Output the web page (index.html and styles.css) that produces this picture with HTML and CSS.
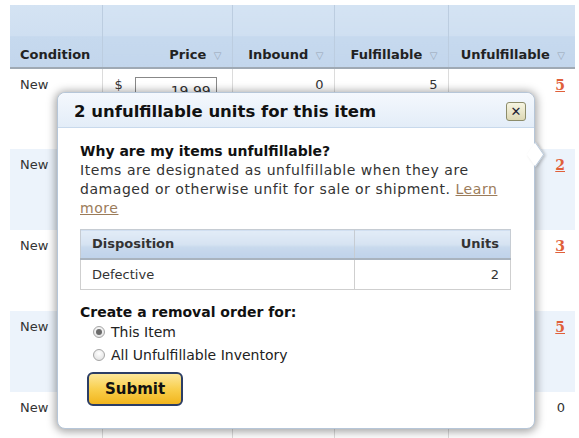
FILE: index.html
```html
<!DOCTYPE html>
<html>
<head>
<meta charset="utf-8">
<link rel="stylesheet" href="styles.css">
</head>
<body>
<div class="page">
  <table class="grid">
    <colgroup>
      <col class="c1"><col class="c2"><col class="c3"><col class="c4"><col class="c5">
    </colgroup>
    <thead>
      <tr>
        <th class="left">Condition</th>
        <th>Price <span class="sort">&#9661;</span></th>
        <th>Inbound <span class="sort">&#9661;</span></th>
        <th>Fulfillable <span class="sort">&#9661;</span></th>
        <th>Unfulfillable <span class="sort">&#9661;</span></th>
      </tr>
    </thead>
    <tbody>
      <tr>
        <td>New</td>
        <td class="price"><span class="dollar">$</span><span class="pinput">19.99</span></td>
        <td class="num">0</td>
        <td class="num">5</td>
        <td class="num"><a class="unf">5</a></td>
      </tr>
      <tr class="alt">
        <td>New</td><td></td><td></td><td></td>
        <td class="num"><a class="unf">2</a></td>
      </tr>
      <tr>
        <td>New</td><td></td><td></td><td></td>
        <td class="num"><a class="unf">3</a></td>
      </tr>
      <tr class="alt">
        <td>New</td><td></td><td></td><td></td>
        <td class="num"><a class="unf">5</a></td>
      </tr>
      <tr>
        <td>New</td><td></td><td></td><td></td>
        <td class="num">0</td>
      </tr>
    </tbody>
  </table>

  <div class="popover">
    <div class="pop-head">
      <span class="pop-title">2 unfulfillable units for this item</span>
      <span class="close">&#x2715;</span>
    </div>
    <div class="pop-body">
      <div class="q">Why are my items unfulfillable?</div>
      <p class="desc">Items are designated as unfulfillable when they are damaged or otherwise unfit for sale or shipment. <a class="learn">Learn</a> <a class="learn">more</a></p>
      <table class="disp">
        <thead>
          <tr><th class="dleft">Disposition</th><th class="dright">Units</th></tr>
        </thead>
        <tbody>
          <tr><td class="dleft">Defective</td><td class="dright">2</td></tr>
        </tbody>
      </table>
      <div class="q q2">Create a removal order for:</div>
      <div class="opt"><span class="radio on"></span>This Item</div>
      <div class="opt"><span class="radio"></span>All Unfulfillable Inventory</div>
      <button class="submit">Submit</button>
    </div>
    <span class="arrow"></span>
  </div>
</div>
</body>
</html>
```

FILE: styles.css
```css
html, body {
  margin: 0;
  padding: 0;
  background: #fff;
}
body {
  font-family: "DejaVu Sans", Verdana, sans-serif;
  width: 579px;
  height: 438px;
  overflow: hidden;
}
.page {
  position: relative;
  padding: 5px 4px 0 10px;
}
.grid {
  border-collapse: collapse;
  table-layout: fixed;
  width: 565px;
  font-size: 13px;
  color: #333;
}
.c1 { width: 92px; }
.c2 { width: 130px; }
.c3 { width: 102px; }
.c4 { width: 114px; }
.c5 { width: 127px; }
.grid thead th {
  height: 57px;
  padding: 0 10px 5px 10px;
  vertical-align: bottom;
  text-align: right;
  font-size: 13px;
  font-weight: bold;
  color: #222;
  background: linear-gradient(#d4e3f3 0%, #cfdff1 50%, #c6d9ee 51%, #c3d6ec 100%);
  border-left: 1px solid #bccde0;
  border-bottom: 2px solid #9fa9b4;
  white-space: nowrap;
}
.grid thead th.left {
  text-align: left;
  border-left: none;
}
.sort {
  color: #98a6b6;
  font-size: 10px;
  font-weight: normal;
  margin-left: 3px;
}
.grid td {
  height: 81px;
  padding: 8px 10px 0 10px;
  vertical-align: top;
  border-left: 1px solid #dcdcdc;
  box-sizing: border-box;
}
.grid td:first-child { border-left: none; }
.grid tr.alt td { background: #ecf3fb; }
.grid td.num { text-align: right; }
.price { white-space: nowrap; }
.dollar { margin-left: 2px; }
.pinput {
  display: inline-block;
  width: 70px;
  height: 16px;
  margin-left: 12px;
  border: 1px solid #888;
  text-align: right;
  padding: 2px 5px 0 5px;
  vertical-align: top;
  line-height: 22px;
  font-size: 14px;
}
.unf {
  color: #e0603a;
  font-weight: bold;
  text-decoration: underline;
  font-family: "DejaVu Serif", serif;
  font-size: 14px;
}

/* popover */
.popover {
  position: absolute;
  left: 57px;
  top: 92px;
  width: 476px;
  height: 335px;
  background: #fff;
  border: 1px solid #b6c6d8;
  border-radius: 8px;
  box-shadow: 0 1px 8px 2px rgba(0,0,0,0.35);
  color: #222;
}
.pop-head {
  height: 34px;
  border-bottom: 1px solid #c8d9ec;
  border-radius: 8px 8px 0 0;
  background: linear-gradient(#f4f8fd, #e3edf8);
  display: flex;
  align-items: center;
  justify-content: space-between;
  padding: 0 8px 0 16px;
}
.pop-title {
  font-size: 16.5px;
  font-weight: bold;
  color: #111;
  padding-top: 2px;
}
.close {
  width: 18px;
  height: 17px;
  border: 1px solid #8c8c6a;
  border-radius: 3px;
  background: linear-gradient(#f7f5e2, #ddd8b4);
  font-size: 13px;
  line-height: 17px;
  text-align: center;
  color: #1e2233;
  font-weight: bold;
  margin-top: 2px;
}
.pop-body {
  padding: 14px 22px 0 22px;
}
.q {
  font-size: 14px;
  font-weight: bold;
  color: #111;
  line-height: 18px;
}
.desc {
  margin: 1px 0 0 0;
  font-size: 14px;
  letter-spacing: 0.55px;
  line-height: 19px;
  color: #333;
}
.learn {
  color: #9b7c5a;
  text-decoration: underline;
}
.disp {
  margin-top: 11px;
  width: 431px;
  border-collapse: collapse;
  font-size: 13px;
  color: #333;
}
.disp th {
  height: 29px;
  padding: 0 11px;
  font-weight: bold;
  background: linear-gradient(#e2ecf7 0%, #d6e3f2 50%, #c8d9ed 60%, #bfd2ea 100%);
  border: 1px solid #c6ccd3;
  border-bottom: 2px solid #a9b3be;
  box-sizing: border-box;
}
.disp td {
  height: 29px;
  padding: 0 11px;
  border: 1px solid #cfcfcf;
}
.dleft { text-align: left; width: 251px; }
.dright { text-align: right; }
.q2 { margin-top: 13px; }
.opt {
  display: flex;
  align-items: center;
  font-size: 14px;
  line-height: 23px;
  color: #222;
  padding-left: 13px;
}
.radio {
  width: 12px;
  height: 12px;
  border-radius: 50%;
  border: 1px solid #a5a5a5;
  background: radial-gradient(circle at 50% 35%, #ffffff, #dcdcdc);
  margin-right: 6px;
  box-sizing: border-box;
  position: relative;
  flex: none;
}
.radio.on::after {
  content: "";
  position: absolute;
  left: 2px;
  top: 2px;
  width: 6px;
  height: 6px;
  border-radius: 50%;
  background: #6a6a6a;
}
.submit {
  margin: 5px 0 0 7px;
  width: 96px;
  height: 34px;
  border: 2px solid #2c3e66;
  border-radius: 6px;
  background: linear-gradient(#fde79a 0%, #f9cf4d 50%, #f2b51d 100%);
  font-family: "DejaVu Sans", Verdana, sans-serif;
  font-size: 15px;
  font-weight: bold;
  color: #111;
  padding: 0;
}
.arrow {
  position: absolute;
  right: -9px;
  top: 54px;
  width: 14px;
  height: 14px;
  background: #fff;
  transform: rotate(45deg) skew(10deg, 10deg);
  border-top: 1px solid #b6c6d8;
  border-right: 1px solid #b6c6d8;
  box-shadow: 2px -1px 3px rgba(0,0,0,0.2);
}
```
